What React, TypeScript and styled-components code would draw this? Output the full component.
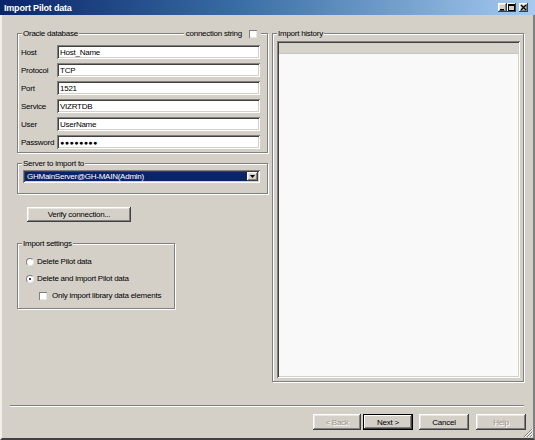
import React from "react";
import styled, { createGlobalStyle, css } from "styled-components";

const GlobalStyle = createGlobalStyle`
  html, body {
    margin: 0;
    padding: 0;
    background: #d4d0c8;
  }
  body {
    font-family: "Liberation Sans", Arial, sans-serif;
  }
`;

const raised = css`
  background: #d4d0c8;
  box-shadow: inset -1px -1px #404040, inset 1px 1px #ffffff,
    inset -2px -2px #808080, inset 2px 2px #e8e6e1;
`;

const sunken = css`
  box-shadow: inset 1px 1px #808080, inset -1px -1px #ffffff,
    inset 2px 2px #404040, inset -2px -2px #d4d0c8;
`;

const Window = styled.div`
  width: 535px;
  height: 440px;
  display: flex;
  flex-direction: column;
  background: #d4d0c8;
  font-size: 8px;
  letter-spacing: -0.25px;
  white-space: nowrap;
  color: #000;
  overflow: hidden;
`;

const TitleBar = styled.div`
  height: 15px;
  flex-shrink: 0;
  display: flex;
  align-items: center;
  padding: 0 7px 0 4px;
  background: linear-gradient(to right, #0a246a 0%, #3a6ea5 45%, #a6caf0 100%);
`;

const Title = styled.div`
  color: #fff;
  font-weight: bold;
  font-size: 9px;
  letter-spacing: -0.2px;
`;

const TitleButtons = styled.div`
  margin-left: auto;
  display: flex;
`;

const TitleButton = styled.div<{ $gap?: boolean }>`
  ${raised};
  width: 9px;
  height: 9px;
  display: flex;
  align-items: center;
  justify-content: center;
  margin-left: ${(p) => (p.$gap ? "3px" : "0")};
`;

const Body = styled.div`
  position: relative;
  flex: 1;
  display: flex;
  flex-direction: column;
  padding: 18px 9px 0 8px;
  border-left: 2px solid #f1efe9;
  border-right: 2px solid #808080;
  border-bottom: 2px solid #404040;
`;

const MainRow = styled.div`
  display: flex;
  gap: 4px;
  margin-left: 7px;
  height: 349px;
`;

const LeftColumn = styled.div`
  width: 251px;
  display: flex;
  flex-direction: column;
  align-items: flex-start;
`;

const Group = styled.div<{ $w?: number; $h: number; $mt?: number }>`
  position: relative;
  box-sizing: border-box;
  width: ${(p) => (p.$w ? `${p.$w}px` : "100%")};
  height: ${(p) => p.$h}px;
  margin-top: ${(p) => p.$mt ?? 0}px;
  border: 1px solid #808080;
  box-shadow: inset 1px 1px #ffffff, 1px 1px #ffffff;
`;

const Caption = styled.span`
  position: absolute;
  top: -5px;
  left: 4px;
  padding: 0 1px;
  line-height: 9px;
  background: #d4d0c8;
`;

const ConnectionToggle = styled.div`
  position: absolute;
  top: -5px;
  right: 6px;
  display: flex;
  align-items: center;
  gap: 7px;
  padding: 0 2px;
  line-height: 9px;
  background: #d4d0c8;
`;

const FieldList = styled.div`
  display: flex;
  flex-direction: column;
  gap: 4px;
  padding: 11px 7px 0 3px;
`;

const FieldRow = styled.div`
  display: flex;
  align-items: center;
  height: 14px;
`;

const FieldLabel = styled.span`
  width: 36px;
  flex-shrink: 0;
`;

const TextBox = styled.div<{ $secret?: boolean }>`
  ${sunken};
  flex: 1;
  height: 14px;
  box-sizing: border-box;
  display: flex;
  align-items: center;
  padding-left: 3px;
  background: #fff;
  letter-spacing: ${(p) => (p.$secret ? "0.5px" : "-0.25px")};
  font-size: ${(p) => (p.$secret ? "7px" : "8px")};
`;

const ComboWrap = styled.div`
  padding: 6px 7px 0 5px;
`;

const Combo = styled.div`
  ${sunken};
  height: 13px;
  box-sizing: border-box;
  display: flex;
  padding: 2px;
  background: #fff;
`;

const ComboValue = styled.div`
  flex: 1;
  display: flex;
  align-items: center;
  padding-left: 2px;
  background: #0a246a;
  color: #fff;
`;

const ComboArrow = styled.div`
  ${raised};
  width: 11px;
  display: flex;
  align-items: center;
  justify-content: center;
`;

const PushButton = styled.div<{ $w: number; $disabled?: boolean; $default?: boolean }>`
  ${raised};
  width: ${(p) => p.$w}px;
  height: 16px;
  box-sizing: border-box;
  display: flex;
  align-items: center;
  justify-content: center;
  color: ${(p) => (p.$disabled ? "#9a978f" : "#000")};
  text-shadow: ${(p) => (p.$disabled ? "1px 1px #fff" : "none")};
  ${(p) =>
    p.$default &&
    css`
      border: 1px solid #000;
      box-shadow: inset -1px -1px #404040, inset 1px 1px #ffffff,
        inset -2px -2px #808080;
    `}
`;

const VerifyButton = styled(PushButton)`
  height: 15px;
  margin: 13px 0 0 10px;
`;

const Options = styled.div`
  display: flex;
  flex-direction: column;
  gap: 4px;
  padding: 11px 0 0 8px;
`;

const Option = styled.div<{ $indent?: number }>`
  display: flex;
  align-items: center;
  gap: 3px;
  height: 13px;
  margin-left: ${(p) => p.$indent ?? 0}px;
`;

const Radio = styled.span<{ $on?: boolean }>`
  width: 8px;
  height: 8px;
  box-sizing: border-box;
  border-radius: 50%;
  background: #fff;
  border: 1px solid;
  border-color: #808080 #e8e6e1 #e8e6e1 #808080;
  display: flex;
  align-items: center;
  justify-content: center;
  &::after {
    content: "";
    width: 2px;
    height: 2px;
    border-radius: 50%;
    background: ${(p) => (p.$on ? "#000" : "transparent")};
  }
`;

const Check = styled.span`
  width: 8px;
  height: 8px;
  box-sizing: border-box;
  background: #fff;
  box-shadow: inset 1px 1px #808080, inset -1px -1px #e8e6e1;
  margin-right: 2px;
`;

const HistoryGroup = styled(Group)`
  flex: 1;
  padding: 7px 3px 3px 4px;
  display: flex;
`;

const ListView = styled.div`
  ${sunken};
  flex: 1;
  display: flex;
  flex-direction: column;
  padding: 2px;
  background: #f9f9f9;
`;

const ListHeader = styled.div`
  height: 10px;
  background: #d6d3cd;
  border-bottom: 1px solid #c8c5be;
`;

const Separator = styled.div`
  margin-top: 23px;
  height: 0;
  border-top: 1px solid #808080;
  border-bottom: 1px solid #ffffff;
`;

const ButtonRow = styled.div`
  display: flex;
  justify-content: flex-end;
  margin: 7px -2px 0 0;
`;

const ButtonPair = styled.div`
  display: flex;
  gap: 2px;
  margin-right: 6px;
`;

const Grip = styled.svg`
  position: absolute;
  right: 0;
  bottom: 0;
`;

const fields: [string, string, boolean?][] = [
  ["Host", "Host_Name"],
  ["Protocol", "TCP"],
  ["Port", "1521"],
  ["Service", "VIZRTDB"],
  ["User", "UserName"],
  ["Password", "●●●●●●●●", true],
];

const App = () => {
  return (
    <>
      <GlobalStyle />
      <Window>
        <TitleBar>
          <Title>Import Pilot data</Title>
          <TitleButtons>
            <TitleButton>
              <svg width="7" height="7" viewBox="0 0 7 7">
                <rect x="1" y="5" width="4" height="1.5" fill="#000" />
              </svg>
            </TitleButton>
            <TitleButton>
              <svg width="7" height="7" viewBox="0 0 7 7">
                <rect x="0.5" y="0.5" width="6" height="6" fill="none" stroke="#000" />
                <rect x="0.5" y="0.5" width="6" height="1.5" fill="#000" />
              </svg>
            </TitleButton>
            <TitleButton $gap>
              <svg width="7" height="7" viewBox="0 0 7 7">
                <path d="M1 1 L6 6 M6 1 L1 6" stroke="#000" strokeWidth="1.4" />
              </svg>
            </TitleButton>
          </TitleButtons>
        </TitleBar>

        <Body>
          <MainRow>
            <LeftColumn>
              <Group $h={120}>
                <Caption>Oracle database</Caption>
                <ConnectionToggle>
                  connection string
                  <Check />
                </ConnectionToggle>
                <FieldList>
                  {fields.map(([label, value, secret]) => (
                    <FieldRow key={label}>
                      <FieldLabel>{label}</FieldLabel>
                      <TextBox $secret={secret}>{value}</TextBox>
                    </FieldRow>
                  ))}
                </FieldList>
              </Group>

              <Group $h={31} $mt={10}>
                <Caption>Server to import to</Caption>
                <ComboWrap>
                  <Combo>
                    <ComboValue>GHMainServer@GH-MAIN(Admin)</ComboValue>
                    <ComboArrow>
                      <svg width="5" height="3" viewBox="0 0 5 3">
                        <path d="M0 0 H5 L2.5 3 Z" fill="#000" />
                      </svg>
                    </ComboArrow>
                  </Combo>
                </ComboWrap>
              </Group>

              <VerifyButton $w={104}>Verify connection...</VerifyButton>

              <Group $w={158} $h={66} $mt={21}>
                <Caption>Import settings</Caption>
                <Options>
                  <Option>
                    <Radio />
                    Delete Pilot data
                  </Option>
                  <Option>
                    <Radio $on />
                    Delete and import Pilot data
                  </Option>
                  <Option $indent={13}>
                    <Check />
                    Only import library data elements
                  </Option>
                </Options>
              </Group>
            </LeftColumn>

            <HistoryGroup $h={349}>
              <Caption>Import history</Caption>
              <ListView>
                <ListHeader />
              </ListView>
            </HistoryGroup>
          </MainRow>

          <Separator />

          <ButtonRow>
            <ButtonPair>
              <PushButton $w={48} $disabled>
                &lt; Back
              </PushButton>
              <PushButton $w={50} $default>
                Next &gt;
              </PushButton>
            </ButtonPair>
            <PushButton $w={50} style={{ marginRight: 7 }}>
              Cancel
            </PushButton>
            <PushButton $w={50} $disabled>
              Help
            </PushButton>
          </ButtonRow>

          <Grip width="10" height="10" viewBox="0 0 10 10">
            <path d="M9 1 L1 9 M9 4 L4 9 M9 7 L7 9" stroke="#808080" strokeWidth="1" />
            <path d="M10 1 L2 9 M10 4 L5 9 M10 7 L8 9" stroke="#ffffff" strokeWidth="1" />
          </Grip>
        </Body>
      </Window>
    </>
  );
};

export default App;
